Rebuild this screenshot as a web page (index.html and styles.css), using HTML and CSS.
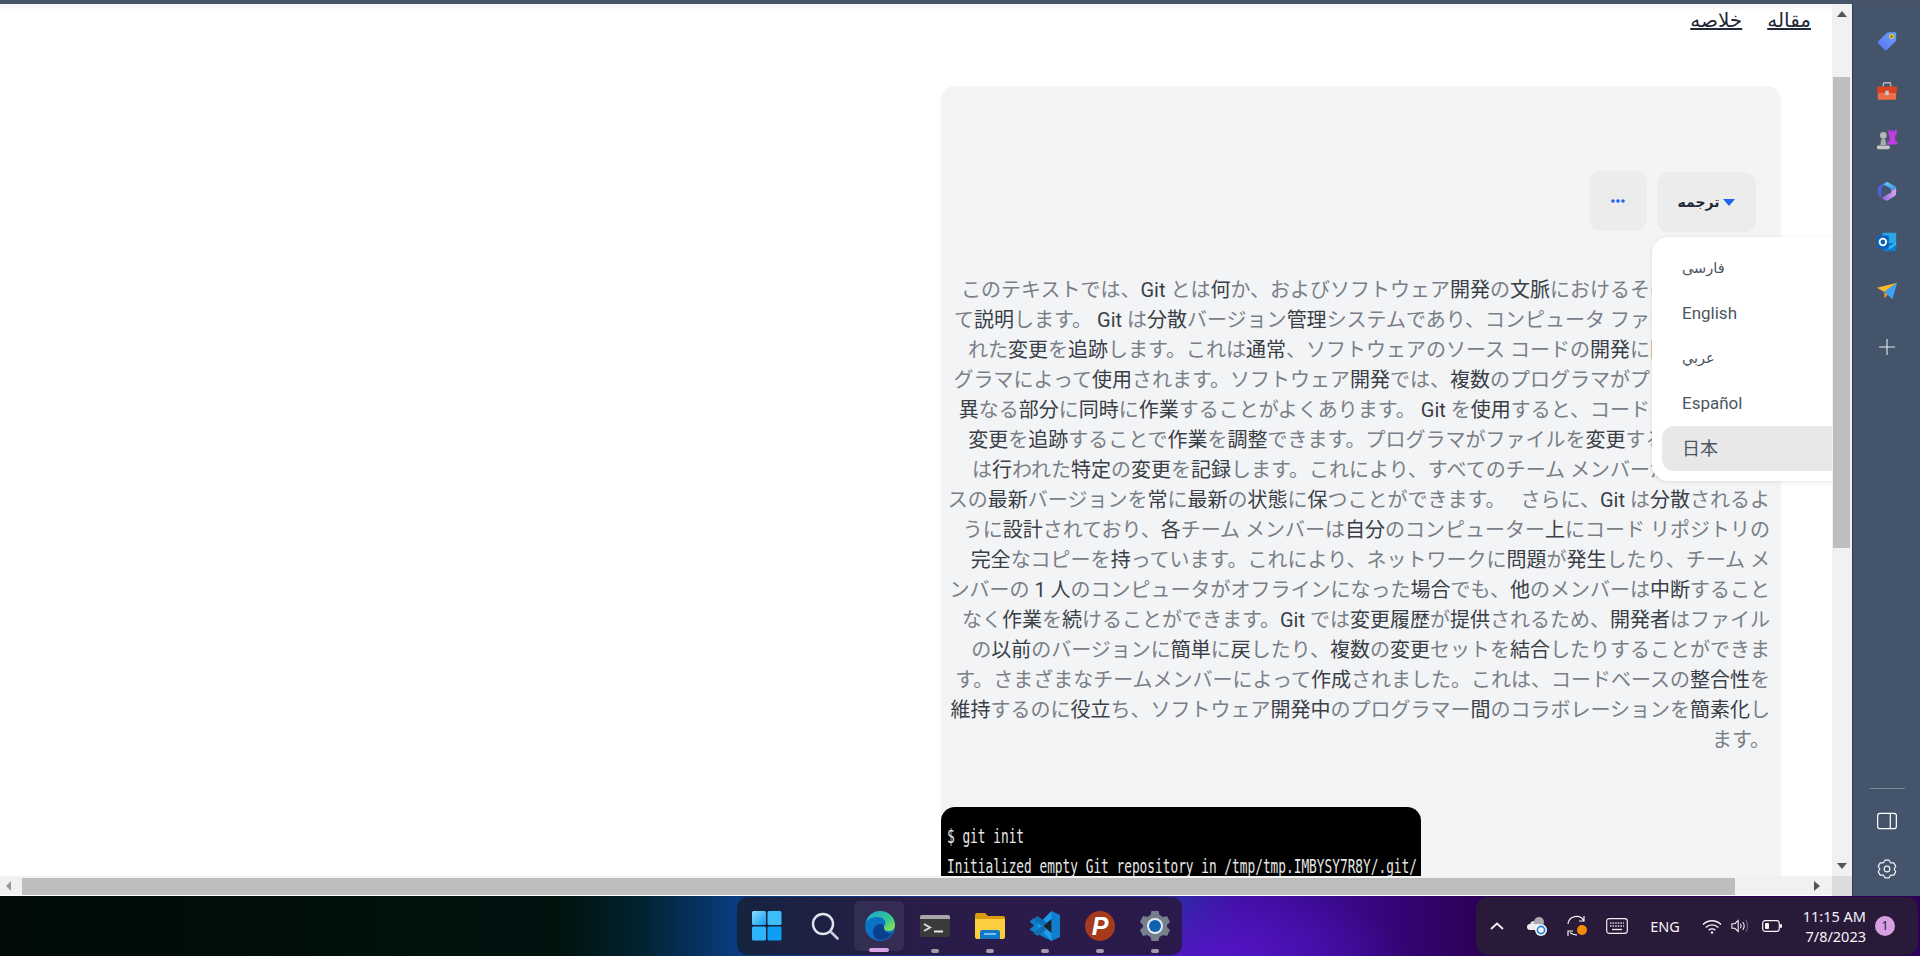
FILE: index.html
```html
<!DOCTYPE html>
<html lang="fa">
<head>
<meta charset="utf-8">
<title>Git</title>
<link rel="stylesheet" href="styles.css">
</head>
<body>
<div class="screen">
  <div class="desktop">
    <div class="browser">
      <div class="browser-top">
        <main class="viewport">
          <nav class="tabs">
            <a href="#">خلاصه</a>
            <a href="#">مقاله</a>
          </nav>
          <section class="card">
            <div class="toolbar">
              <button class="tool more"><svg width="14" height="4" viewBox="0 0 14 4"><circle cx="2" cy="2" r="1.8"/><circle cx="7" cy="2" r="1.8"/><circle cx="12" cy="2" r="1.8"/></svg></button>
              <button class="tool translate"><span>ترجمه</span><i class="caret"></i></button>
            </div>
            <ul class="menu">
              <li class="ar">فارسی</li>
              <li>English</li>
              <li class="ar">عربي</li>
              <li>Español</li>
              <li class="active">日本</li>
            </ul>
            <p class="summary">このテキストでは、<b>Git</b> とは<b>何</b>か、およびソフトウェア<b>開発</b>の<b>文脈</b>におけるその<b>役割</b>につい<br>て<b>説明</b>します。 <b>Git</b> は<b>分散</b>バージョン<b>管理</b>システムであり、コンピュータ ファイルに<b>加</b>えら<br>れた<b>変更</b>を<b>追跡</b>します。これは<b>通常</b>、ソフトウェアのソース コードの<b>開発</b>に<b>関与</b>するプロ<br>グラマによって<b>使用</b>されます。ソフトウェア<b>開発</b>では、<b>複数</b>のプログラマがプロジェクトの<br><b>異</b>なる<b>部分</b>に<b>同時</b>に<b>作業</b>することがよくあります。 <b>Git</b> を<b>使用</b>すると、コードに<b>加</b>えられた<br><b>変更</b>を<b>追跡</b>することで<b>作業</b>を<b>調整</b>できます。プログラマがファイルを<b>変更</b>するたびに、<b>Git</b><br>は<b>行</b>われた<b>特定</b>の<b>変更</b>を<b>記録</b>します。これにより、すべてのチーム メンバーがコードベー<br>スの<b>最新</b>バージョンを<b>常</b>に<b>最新</b>の<b>状態</b>に<b>保</b>つことができます。&ensp; さらに、<b>Git</b> は<b>分散</b>されるよ<br>うに<b>設計</b>されており、<b>各</b>チーム メンバーは<b>自分</b>のコンピューター<b>上</b>にコード リポジトリの<br><b>完全</b>なコピーを<b>持</b>っています。これにより、ネットワークに<b>問題</b>が<b>発生</b>したり、チーム メ<br>ンバーの <b>1 人</b>のコンピュータがオフラインになった<b>場合</b>でも、<b>他</b>のメンバーは<b>中断</b>すること<br>なく<b>作業</b>を<b>続</b>けることができます。<b>Git</b> では<b>変更履歴</b>が<b>提供</b>されるため、<b>開発者</b>はファイル<br>の<b>以前</b>のバージョンに<b>簡単</b>に<b>戻</b>したり、<b>複数</b>の<b>変更</b>セットを<b>結合</b>したりすることができま<br>す。さまざまなチームメンバーによって<b>作成</b>されました。これは、コードベースの<b>整合性</b>を<br><b>維持</b>するのに<b>役立</b>ち、ソフトウェア<b>開発中</b>のプログラマー<b>間</b>のコラボレーションを<b>簡素化</b>し<br>ます。</p>
            <pre class="terminal"><code>$ git init
Initialized empty Git repository in /tmp/tmp.IMBYSY7R8Y/.git/
$ git status</code></pre>
          </section>
        </main>
        <div class="vscroll">
          <i class="arrow up"></i>
          <div class="vtrack"><div class="vthumb"></div></div>
          <i class="arrow down"></i>
        </div>
      </div>
      <div class="hscroll">
        <i class="arrow left"></i>
        <div class="hthumb"></div>
        <i class="arrow right"></i>
        <div class="corner"></div>
      </div>
    </div>
    <aside class="sidebar">
      <div class="side-apps">
        <svg class="side-icon" viewBox="0 0 24 24"><defs><linearGradient id="tagG" x1="0" y1="1" x2="1" y2="0"><stop offset="0" stop-color="#5b6ff5"/><stop offset="1" stop-color="#6ba4f8"/></linearGradient></defs><path d="M13.5 2.5h7a1.5 1.5 0 0 1 1.5 1.5v7a2 2 0 0 1-.6 1.4L11.8 21.8a1.6 1.6 0 0 1-2.2 0L2.4 14.6a1.6 1.6 0 0 1 0-2.2L12 3.1a2 2 0 0 1 1.5-.6z" fill="url(#tagG)"/><circle cx="17" cy="7" r="2.6" fill="#f6cf1f"/><circle cx="17" cy="7" r="1" fill="#333"/></svg>
        <svg class="side-icon" viewBox="0 0 24 24"><path d="M8 6V3.5A1.5 1.5 0 0 1 9.5 2h5A1.5 1.5 0 0 1 16 3.5V6" fill="none" stroke="#b8b8b8" stroke-width="1.6"/><rect x="1" y="6" width="22" height="7" rx="1" fill="#d8441f"/><rect x="2" y="13" width="20" height="7.5" rx="1" fill="#ee6f47"/><rect x="10" y="10.5" width="4" height="5" rx="1" fill="#c9c9c9"/></svg>
        <svg class="side-icon" viewBox="0 0 24 24"><circle cx="8" cy="7" r="3.6" fill="#b7b7b7"/><path d="M6 11h4l1.4 6.5H4.6z" fill="#a9a9a9"/><rect x="1" y="18" width="14" height="4" rx="1.5" fill="#c6c6c6"/><path d="M13.5 1h2v2h1.4V1h2v2h1.4V1h2.2v5l-1.7 1.5.6 6.5h2v3h-11v-3h2l.6-6.5L13.5 6z" fill="#c03de6"/></svg>
        <svg class="side-icon" viewBox="0 0 24 24"><defs><linearGradient id="cpA" x1="0" y1="0" x2="1" y2="1"><stop offset="0" stop-color="#3b6fe0"/><stop offset="1" stop-color="#6a4fd0"/></linearGradient><linearGradient id="cpB" x1="0" y1="0" x2="1" y2="1"><stop offset="0" stop-color="#63d1f2"/><stop offset="1" stop-color="#3d86e6"/></linearGradient><linearGradient id="cpC" x1="0" y1="0" x2="1" y2="0"><stop offset="0" stop-color="#8e5ee6"/><stop offset="1" stop-color="#d8a6ec"/></linearGradient></defs><path d="M11 2 3.500 6.500Q2 7.500 2 9.500v5q0 2 1.500 3L6 19V9.500Q6 8 7.500 7.200L14.500 3.500 13 2.400Q12 1.500 11 2z" fill="url(#cpA)"/><path d="M12 1.800l8.500 4.700Q22 7.500 22 9L16.500 12V11Q16.500 9.500 15 8.800L8.500 5z" fill="url(#cpB)"/><path d="M22 9v5.500q0 2-1.500 3L13 22q-1.500 1-3 0l-4-2.500 6-3.500 4.500-2.500V12z" fill="url(#cpC)"/></svg>
        <svg class="side-icon" viewBox="0 0 24 24"><rect x="7" y="2" width="15" height="12" rx="1" fill="#28a8ea"/><path d="M8 13h14v8a1 1 0 0 1-1 1H9a1 1 0 0 1-1-1z" fill="#0f7bd0"/><path d="M22 12l-7 5-7-5v3l7 5 7-5z" fill="#35b8f1"/><rect x="1" y="5" width="13" height="14" rx="1.4" fill="#0a62b8"/><circle cx="7.5" cy="12" r="3.6" fill="none" stroke="#fff" stroke-width="2"/></svg>
        <svg class="side-icon" viewBox="0 0 24 24"><path d="M1 8.5 23 3 9 13z" fill="#f6b92c"/><path d="M23 3 9 13l9 8z" fill="#3da3f5"/><path d="M9 13v7l3.8-3.6z" fill="#e8962a"/></svg>
        <svg class="side-plus" viewBox="0 0 16 16"><path d="M8 0v16M0 8h16" stroke="#e5e9ef" stroke-width="1.1"/></svg>
      </div>
      <div class="side-tools">
        <hr class="side-rule">
        <svg class="side-icon" viewBox="0 0 20 20"><rect x="1.5" y="3" width="17" height="14" rx="2" fill="none" stroke="#fff" stroke-width="1.1"/><path d="M13 3v14" stroke="#fff" stroke-width="1.1"/></svg>
        <svg class="side-icon" viewBox="0 0 24 24" fill="none" stroke="#f1f4f7" stroke-width="1.3" stroke-linejoin="round"><circle cx="12" cy="12" r="3.1"/><path d="M9.920 2.220h4.160L15.900 5.250l3.530.060 2.080 3.600L19.800 12l1.710 3.090-2.080 3.600-3.530.060-1.820 3.030H9.920L8.100 18.750l-3.530-.060-2.080-3.600L4.200 12 2.490 8.910l2.080-3.600 3.530-.060z"/></svg>
      </div>
    </aside>
  </div>
  <footer class="taskbar">
    <div class="dock">
      <div class="slot first"><svg width="30" height="30" viewBox="0 0 30 30"><defs><linearGradient id="winG" x1="0" y1="0" x2="1" y2="1"><stop offset="0" stop-color="#8ce0ff"/><stop offset="1" stop-color="#0f9bf5"/></linearGradient></defs><rect width="14" height="14" rx="1.5" fill="url(#winG)"/><rect x="15.5" width="14" height="14" rx="1.5" fill="#3dbcfb"/><rect y="15.5" width="14" height="14" rx="1.5" fill="#2db4fb"/><rect x="15.5" y="15.5" width="14" height="14" rx="1.5" fill="#0f9ef6"/></svg></div>
      <div class="slot"><svg width="28" height="28" viewBox="0 0 28 28" fill="none"><circle cx="12" cy="12" r="10" stroke="#dfe4ec" stroke-width="2.4"/><path d="M19.5 19.5 26.5 26.5" stroke="#c9ced6" stroke-width="2.6" stroke-linecap="round"/></svg></div>
      <div class="slot active"><svg width="30" height="30" viewBox="0 0 30 30"><defs><linearGradient id="edgeG" x1="0" y1="0" x2="1" y2="1"><stop offset="0" stop-color="#1aa4dc"/><stop offset=".6" stop-color="#37c98c"/><stop offset="1" stop-color="#a2e34a"/></linearGradient></defs><circle cx="15" cy="15" r="15" fill="#0c72c4"/><path d="M1 11C3 4 9 0 15 0c8 0 15 6 15 14 0 4-3 6-6.500 6-3 0-5-1-5-3 0-3 2-2 2-5 0-3-3-6-8-6C8 6 3 8 1 11z" fill="url(#edgeG)"/><path d="M8 22c0-5 3-9 7-9 3 0 4 2 4 4 0 3 3 5 6 5 1 0 2 0 3-1-3 5-8 8-13 8-3 0-7-3-7-7z" fill="#0b3f8f"/></svg></div>
      <div class="slot"><svg width="30" height="22" viewBox="0 0 30 22"><rect width="30" height="22" rx="2" fill="#3a3a3a"/><path d="M0 2a2 2 0 0 1 2-2h26a2 2 0 0 1 2 2v2H0z" fill="#a7a7a7"/><path d="M4 9l6 3.500-6 3.500" fill="none" stroke="#d8d8d8" stroke-width="2"/><rect x="14" y="15.500" width="9" height="2" fill="#e8e8e8"/></svg></div>
      <div class="slot"><svg width="30" height="26" viewBox="0 0 30 26"><path d="M0 2a2 2 0 0 1 2-2h8l3 3h15a2 2 0 0 1 2 2v4H0z" fill="#d99c0a"/><path d="M0 6h30v18a2 2 0 0 1-2 2H2a2 2 0 0 1-2-2z" fill="#fbcd3f"/><path d="M5 26v-7a2 2 0 0 1 2-2h16a2 2 0 0 1 2 2v7z" fill="#1377c6"/><rect x="9" y="20" width="12" height="2" fill="#6fc1f2"/></svg></div>
      <div class="slot"><svg width="30" height="30" viewBox="0 0 30 30"><path d="M21.500 0 30 4v22l-8.500 4L0 19v-1l4-3.500L0 11v-1l3.500-2.500L10 12z" fill="#0f7fcc"/><path d="M21.500 0v30L7 15z" fill="#1f9cf0"/><path d="M21.500 8v14L13 15z" fill="#19232f"/><path d="M3 8l4.500-3 14 10-5 3.500zM3 22l4.500 3 14-10-5-3.500z" fill="#0e6db3"/></svg></div>
      <div class="slot"><svg width="30" height="30" viewBox="0 0 30 30"><circle cx="15" cy="15" r="15" fill="#a63a1c"/><text x="15" y="24" class="psiphon">P</text></svg></div>
      <div class="slot"><svg width="30" height="30" viewBox="0 0 30 30"><path d="M11.500 0h7l1 4 3.500 2 4-1 3 6-3 3v2l3 3-3 6-4-1-3.500 2-1 4h-7l-1-4L7 24l-4 1-3-6 3-3v-2L0 11l3-6 4 1 3.500-2z" fill="#75808c"/><circle cx="15" cy="15" r="8" fill="#e6e9ee"/><circle cx="15" cy="15" r="6" fill="#0f62b2"/></svg></div>
    </div>
    <div class="tray">
      <div class="tray-item"><svg width="14" height="8" viewBox="0 0 14 8"><path d="M1 7l6-5.500L13 7" fill="none" stroke="#f2f2f2" stroke-width="1.800"/></svg></div>
      <div class="tray-item"><svg width="22" height="22" viewBox="0 0 22 22"><circle cx="8" cy="10" r="4" fill="#d7d7dc"/><circle cx="13" cy="7" r="5" fill="#a9a9b4"/><rect x="1" y="9" width="14" height="6" rx="3" fill="#ededf0"/><circle cx="15" cy="15" r="6" fill="#f4f6f8"/><circle cx="15" cy="15" r="3.600" fill="none" stroke="#1d7fd6" stroke-width="1.600"/></svg></div>
      <div class="tray-item"><svg width="22" height="22" viewBox="0 0 22 22" fill="none"><path d="M2 9a8.500 8.500 0 0 1 16-3M18 1v5h-5M2 21v-5h5M4 17.500c2 1.800 4 2.500 7 2.300" stroke="#f2f2f2" stroke-width="1.200"/><circle cx="16" cy="15" r="5" fill="#f58a07"/></svg></div>
      <div class="tray-item"><svg width="22" height="16" viewBox="0 0 22 16" fill="none"><rect x=".7" y=".7" width="20.600" height="14.600" rx="2.500" stroke="#efeff2" stroke-width="1.200"/><path d="M4 5h14M4 8h14" stroke="#d8d8de" stroke-width="1.400" stroke-dasharray="1.500 1.100"/><path d="M6 11.500h10" stroke="#efeff2" stroke-width="1.300"/></svg></div>
      <div class="tray-item lang">ENG</div>
      <div class="tray-item wifi"><svg width="20" height="15" viewBox="0 0 20 15" fill="none" stroke="#f5f5f5" stroke-width="1.400"><path d="M1 5.500c5-5 13-5 18 0M3.800 8.500c3.500-3.500 9-3.500 12.500 0M6.700 11.200c1.800-1.700 4.800-1.700 6.600 0"/><circle cx="10" cy="13.500" r="1.200" fill="#f5f5f5" stroke="none"/></svg></div>
      <div class="tray-item vol"><svg width="20" height="16" viewBox="0 0 20 16" fill="none" stroke="#f5f5f5" stroke-width="1.200"><path d="M1 5.500h3.200L8 2v12L4.200 10.500H1z"/><path d="M10.500 5.500c1 1.500 1 3.500 0 5M13 3.500c2 2.700 2 6.300 0 9"/><path d="M16.500 1.500c2.500 4 2.500 9 0 13" stroke="#66607a"/></svg></div>
      <div class="tray-item battery"><svg width="20" height="12" viewBox="0 0 20 12"><rect x=".7" y=".7" width="16.600" height="10.600" rx="2.500" fill="none" stroke="#f5f5f5" stroke-width="1.200"/><rect x="3" y="3" width="4" height="6" rx="1" fill="#f5f5f5"/><rect x="18" y="4" width="2" height="4" rx="1" fill="#f5f5f5"/></svg></div>
      <time class="clock"><span>11:15 AM</span><span>7/8/2023</span></time>
      <div class="badge">1</div>
    </div>
  </footer>
</div>
</body>
</html>
```

FILE: styles.css
```css
* { box-sizing: border-box; }
html, body { margin: 0; height: 100%; overflow: hidden; }
body { font-family: Roboto, "Noto Sans CJK JP", "DejaVu Sans", sans-serif; background: #fff; }

.screen { display: flex; flex-direction: column; width: 1920px; height: 956px; }
.desktop { display: flex; height: 896px; border-top: 4px solid #475569; }

.browser { display: flex; flex-direction: column; width: 1852px; }
.browser-top { display: flex; height: 872px; }
.viewport { position: relative; width: 1832px; overflow: hidden; background: #fff; }

.tabs { display: flex; justify-content: flex-end; gap: 25px; height: 82px; padding: 1px 21px 0 0; background: linear-gradient(#f4f4f4, #fff 8px) no-repeat; background-size: 100% 12px; font-family: "DejaVu Sans", sans-serif; font-size: 20px; line-height: 30px; }
.tabs a { color: #1f2937; height: 30px; text-decoration: underline; }

.card { position: relative; width: 840px; height: 800px; margin-left: 941px; padding-top: 86px; background: #f3f4f6; border-radius: 14px; }
.toolbar { display: flex; justify-content: flex-end; align-items: flex-start; gap: 10px; padding-right: 25px; height: 60px; }
.tool { display: flex; align-items: center; justify-content: center; border: 0; background: #ececed; border-radius: 12px; padding: 0; }
.more { width: 58px; height: 60px; margin-top: -1px; }
.more svg { fill: #1d64f2; }
.translate { width: 99px; height: 60px; gap: 4px; font-family: "DejaVu Sans", sans-serif; font-weight: 700; font-size: 14px; color: #1f2937; }
.caret { width: 0; height: 0; border-left: 6px solid transparent; border-right: 6px solid transparent; border-top: 7px solid #1d64f2; order: 2; }

.menu { position: absolute; left: 711px; top: 151px; width: 240px; margin: 0; padding: 9px 10px 10px; list-style: none; background: #fff; border-radius: 16px; box-shadow: 0 1px 4px rgba(0, 0, 0, .1); font-size: 17px; color: #4b5563; }
.menu li { height: 45px; padding-left: 20px; line-height: 45px; border-radius: 12px; }
.menu li.ar { font-size: 14.5px; }
.menu li.active { background: #e8e8e8; font-size: 18px; }

.summary { margin: 43px 11px 0 0; text-align: right; white-space: nowrap; font-size: 20px; line-height: 30px; color: #7a7f87; }
.summary b { font-weight: 400; color: #3a3f47; }

.terminal { width: 480px; height: 220px; margin: 52px 0 0; padding: 15px 6px; background: #000; border-radius: 14px 14px 0 0; color: #e8e8e8; font-family: "DejaVu Sans Mono", monospace; font-size: 12.8px; line-height: 20px; overflow: hidden; }
.terminal code { display: block; font: inherit; transform: scaleY(1.5); transform-origin: 0 0; }

.vscroll { display: flex; flex-direction: column; align-items: center; width: 20px; background: #f1f1f1; }
.vtrack { flex: 1; width: 100%; }
.vthumb { width: 17px; height: 471px; margin: 60px 0 0 1px; background: #bebebe; }
.arrow { display: block; flex: none; width: 0; height: 0; border: 5px solid transparent; }
.arrow.up { margin-top: 7px; border-top-width: 0; border-bottom: 6px solid #555; }
.arrow.down { margin-bottom: 7px; border-bottom-width: 0; border-top: 6px solid #555; }
.arrow.left { margin: 0 6px; border-left-width: 0; border-right: 5px solid #9a9a9a; }
.arrow.right { margin: 0 7px 0 auto; border-right-width: 0; border-left: 6px solid #555; }

.hscroll { display: flex; align-items: center; height: 20px; background: #f1f1f1; border-bottom: 1px solid #fff; }
.hthumb { width: 1713px; height: 17px; margin: 2px 0 0 5px; background: #bebebe; }
.corner { width: 20px; height: 20px; margin-left: 5px; background: #dcdcdc; align-self: flex-start; }

.sidebar { display: flex; flex-direction: column; justify-content: space-between; width: 68px; padding: 26px 0 16px 1px; background: #44546a; border-left: 1px solid #2f3b4b; }
.side-apps, .side-tools { display: flex; flex-direction: column; align-items: center; gap: 29px; }
.side-icon { width: 22px; height: 22px; }
.side-icon:nth-child(3) { margin-top: -3px; }
.side-icon:nth-child(6) { margin-top: -2px; }
.side-plus { width: 16px; height: 16px; margin-top: 8px; }
.side-rule { width: 35px; height: 1px; margin: 0 0 -8px; border: 0; background: #7b8798; }

.taskbar { display: flex; justify-content: space-between; height: 60px; padding: 1px 2px 1px 737px; color: #f5f5f5; background: radial-gradient(ellipse 190px 70px at 1215px 60px, #5314c4, transparent), linear-gradient(90deg, #000b09 0, #00130f 560px, #02222f 640px, #0a3c80 737px, #2a2aa0 1185px, #420ea6 1240px, #3b0a92 1320px, #2c0058 1476px); }
.dock { display: flex; width: 445px; padding-left: 2px; border-radius: 10px; background: linear-gradient(90deg, #14243f, #2a1c48 40%, #2a1a4c); }
.slot { position: relative; display: flex; align-items: center; justify-content: center; width: 55px; padding-bottom: 1px; }
.slot.first { margin-right: 3px; }
.slot:nth-child(n+4)::after { content: ""; position: absolute; left: 24px; bottom: 2px; width: 8px; height: 4px; border-radius: 2px; background: #a59cb0; }
.slot.active::before { content: ""; position: absolute; left: 2px; top: 4px; width: 50px; height: 50px; border-radius: 6px; background: rgba(255, 255, 255, .07); }
.slot.active::after { content: ""; position: absolute; left: 17px; bottom: 3px; width: 20px; height: 4px; border-radius: 2px; background: #d9a3e6; }
.slot svg { position: relative; }
.psiphon { fill: #fff; font: italic 700 25px "Liberation Sans", sans-serif; text-anchor: middle; }

.tray { display: flex; align-items: center; width: 442px; padding-left: 1px; border-radius: 12px; background: #291a3a; }
.tray-item { display: flex; align-items: center; justify-content: center; width: 40px; height: 100%; }
.lang { width: 56px; font: 14.5px "Noto Sans", sans-serif; }
.wifi { width: 38px; }
.vol { width: 18px; }
.battery { width: 46px; }
.clock { display: flex; flex-direction: column; align-items: flex-end; width: 71px; font: 14.5px/20px "Noto Sans", sans-serif; }
.badge { width: 20px; height: 20px; margin-left: 9px; border-radius: 50%; background: #d89fe3; color: #2a1a3a; font: 12px/20px "Noto Sans", sans-serif; text-align: center; }
```
